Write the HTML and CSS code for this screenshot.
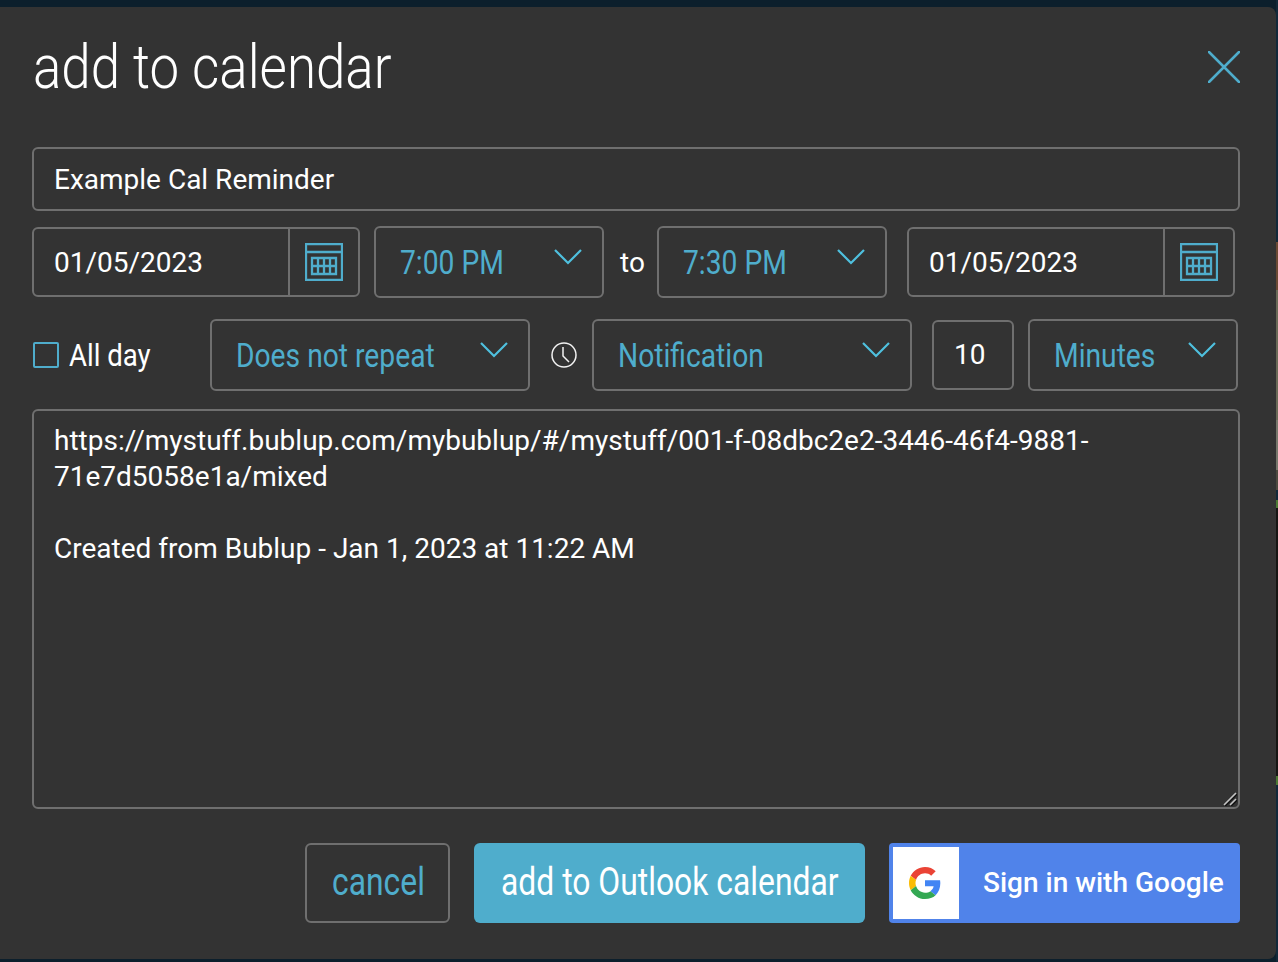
FILE: index.html
```html
<!DOCTYPE html>
<html lang="en">
<head>
<meta charset="utf-8">
<title>add to calendar</title>
<link rel="stylesheet" href="styles.css">
</head>
<body>
<div class="modal">
  <header class="head">
    <h1 class="title"><span class="cond">add to calendar</span></h1>
    <svg class="close" viewBox="0 0 32 32"><path d="M1 1 31 31M31 1 1 31"/></svg>
  </header>
  <div class="field name">Example Cal Reminder</div>
  <div class="row row-time">
    <div class="field date">
      <span>01/05/2023</span>
      <span class="cal-cell"><svg class="cal" viewBox="0 0 38 38"><path d="M1 1h36v36H1zM1 9h36"/><path d="M7 15h24v16H7zM7 23h24M13 15v16M19 15v16M25 15v16"/></svg></span>
    </div>
    <div class="field select time"><span class="cond-wrap"><span class="cond">7:00 PM</span></span><svg class="chev" viewBox="0 0 28 16"><path d="M1 1 14 14 27 1"/></svg></div>
    <span class="to">to</span>
    <div class="field select time time-end"><span class="cond-wrap"><span class="cond">7:30 PM</span></span><svg class="chev" viewBox="0 0 28 16"><path d="M1 1 14 14 27 1"/></svg></div>
    <div class="field date date-end">
      <span>01/05/2023</span>
      <span class="cal-cell"><svg class="cal" viewBox="0 0 38 38"><path d="M1 1h36v36H1zM1 9h36"/><path d="M7 15h24v16H7zM7 23h24M13 15v16M19 15v16M25 15v16"/></svg></span>
    </div>
  </div>
  <div class="row row-opts">
    <label class="allday"><span class="check"></span><span class="cond">All day</span></label>
    <div class="field select repeat"><span class="cond-wrap"><span class="cond">Does not repeat</span></span><svg class="chev" viewBox="0 0 28 16"><path d="M1 1 14 14 27 1"/></svg></div>
    <svg class="clock" viewBox="0 0 26 26"><circle cx="13" cy="13" r="12"/><path d="M12 5v9l6 6"/></svg>
    <div class="field select notif"><span class="cond-wrap"><span class="cond">Notification</span></span><svg class="chev" viewBox="0 0 28 16"><path d="M1 1 14 14 27 1"/></svg></div>
    <div class="field count">10</div>
    <div class="field select minutes"><span class="cond-wrap"><span class="cond">Minutes</span></span><svg class="chev" viewBox="0 0 28 16"><path d="M1 1 14 14 27 1"/></svg></div>
  </div>
  <div class="field notes">
    <p class="note-line">https://mystuff.bublup.com/mybublup/#/mystuff/001-f-08dbc2e2-3446-46f4-9881-<br>71e7d5058e1a/mixed</p>
    <p class="note-line note-gap">Created from Bublup - Jan 1, 2023 at 11:22 AM</p>
    <svg class="grip" viewBox="0 0 14 14"><path class="grip-dark" d="M2 14 14 2M8 14l6-6"/><path d="M1 13 13 1M7 13l6-6"/></svg>
  </div>
  <footer class="actions">
    <button class="btn cancel"><span class="cond">cancel</span></button>
    <button class="btn add"><span class="cond">add to Outlook calendar</span></button>
    <button class="google">
      <span class="g-box"><svg class="g-logo" viewBox="0 0 48 48"><path fill="#EA4335" d="M24 9.500c3.540 0 6.710 1.220 9.210 3.600l6.850-6.850C35.900 2.380 30.470 0 24 0 14.620 0 6.510 5.380 2.560 13.220l7.980 6.190C12.430 13.720 17.740 9.500 24 9.500z"/><path fill="#4285F4" d="M46.980 24.550c0-1.570-.15-3.090-.38-4.550H24v9.020h12.940c-.58 2.960-2.260 5.480-4.780 7.180l7.730 6c4.510-4.180 7.090-10.360 7.090-17.650z"/><path fill="#FBBC05" d="M10.530 28.590c-.48-1.450-.76-2.990-.76-4.590s.27-3.140.76-4.590l-7.980-6.190C.92 16.460 0 20.120 0 24c0 3.880.92 7.540 2.560 10.780l7.970-6.190z"/><path fill="#34A853" d="M24 48c6.480 0 11.930-2.130 15.890-5.810l-7.730-6c-2.150 1.450-4.920 2.300-8.160 2.300-6.260 0-11.570-4.220-13.470-9.910l-7.980 6.190C6.510 42.620 14.620 48 24 48z"/></svg></span>
      <span class="g-text">Sign in with Google</span>
    </button>
  </footer>
</div>
</body>
</html>
```
FILE: styles.css
```css
* { box-sizing: border-box; }
html, body { margin: 0; height: 962px; overflow: hidden; }
body {
  background:
    linear-gradient(#12293a 0 242px, #6b4a35 242px 290px, #6a6a58 290px 420px, #77776c 420px 470px, #4d4a40 470px 490px, #12293a 490px 500px, #4c7a34 500px 508px, #161614 508px 776px, #4c7a34 776px 785px, #12293a 785px) right top / 2px 100% no-repeat,
    #0c1f2c;
  font-family: Roboto, "Liberation Sans", sans-serif;
  color: #fff;
  padding: 7px 2px 3px 0;
}
.modal {
  width: 1276px;
  height: 952px;
  background: #333;
  border-radius: 0 8px 8px 0;
  padding: 0 36px 0 32px;
  display: flex;
  flex-direction: column;
}
.cond { display: inline-block; transform: scaleX(0.83); transform-origin: left center; white-space: nowrap; }
.head { height: 140px; display: flex; justify-content: space-between; align-items: flex-start; }
.title { margin: 22px 0 0 1px; font-size: 62px; line-height: 76px; font-weight: 300; white-space: nowrap; }
.title .cond { transform: scaleX(0.853); }
.close { width: 32px; height: 32px; margin-top: 44px; fill: none; stroke: #4fadcc; stroke-width: 2.500; stroke-linecap: round; }
.field { border: 2px solid #6f6f6f; border-radius: 6px; display: flex; align-items: center; font-size: 28px; flex-shrink: 0; }
.name { height: 64px; padding-left: 20px; }
.row { display: flex; align-items: center; }
.row-time { height: 72px; margin-top: 15px; }
.date { width: 328px; height: 70px; padding-left: 20px; justify-content: space-between; }
.date-end { margin-left: 20px; }
.cal-cell { width: 70px; height: 100%; border-left: 2px solid #6f6f6f; display: flex; align-items: center; justify-content: center; }
.cal { width: 38px; height: 38px; fill: none; stroke: #4fadcc; stroke-width: 2.300; }
.select { position: relative; color: #4fadcc; font-size: 34px; }
.cond-wrap { display: block; padding-left: 24px; }
.chev { position: absolute; right: 20px; top: 21px; width: 28px; height: 16px; fill: none; stroke: #4fc0de; stroke-width: 2.200; }
.time { width: 230px; height: 72px; margin-left: 14px; }
.time-end { margin-left: 0; }
.to { width: 53px; padding-left: 16px; font-size: 28px; flex-shrink: 0; }
.row-opts { height: 72px; margin-top: 21px; }
.allday { width: 178px; display: flex; align-items: center; font-size: 31px; padding-left: 1px; flex-shrink: 0; }
.allday .cond { transform: scaleX(.89); }
.check { width: 26px; height: 26px; border: 2px solid #4fadcc; border-radius: 2px; margin-right: 10px; }
.repeat { width: 320px; height: 72px; }
.clock { width: 26px; height: 26px; margin: 0 15px 0 21px; fill: none; stroke: #f2f2f2; stroke-width: 1.500; flex-shrink: 0; }
.notif { width: 320px; height: 72px; }
.count { width: 82px; height: 70px; margin-left: 20px; padding: 0 0 2px 20px; }
.minutes { width: 210px; height: 72px; margin-left: 14px; }
.notes { display: block; position: relative; height: 400px; margin-top: 18px; padding: 12px 20px; line-height: 36px; }
.note-line { margin: 0; }
.note-gap { margin-top: 36px; }
.grip { position: absolute; right: 1px; bottom: 1px; width: 14px; height: 14px; fill: none; stroke: #c4c4c4; stroke-width: 1.600; }
.grip-dark { stroke: #111; }
.actions { display: flex; justify-content: flex-end; gap: 24px; margin-top: 34px; }
.btn { height: 80px; border-radius: 6px; font-family: inherit; font-size: 38px; padding: 0 0 2px; text-align: left; }
.btn .cond { transform: scaleX(.838); }
.cancel { width: 145px; background: none; border: 2px solid #6f6f6f; color: #4fadcc; padding-left: 25px; }
.add { width: 391px; background: #4fadcc; border: 0; color: #fff; padding-left: 27px; }
.google { width: 351px; height: 80px; background: #5083ea; border: 0; border-radius: 4px; padding: 4px; display: flex; align-items: center; font-family: inherit; color: #fff; font-size: 28px; font-weight: 500; }
.g-box { width: 66px; height: 72px; background: #fff; display: flex; align-items: center; padding-left: 16px; }
.g-logo { width: 32px; height: 32px; }
.g-text { margin: 0 0 2px 24px; white-space: nowrap; }
```
